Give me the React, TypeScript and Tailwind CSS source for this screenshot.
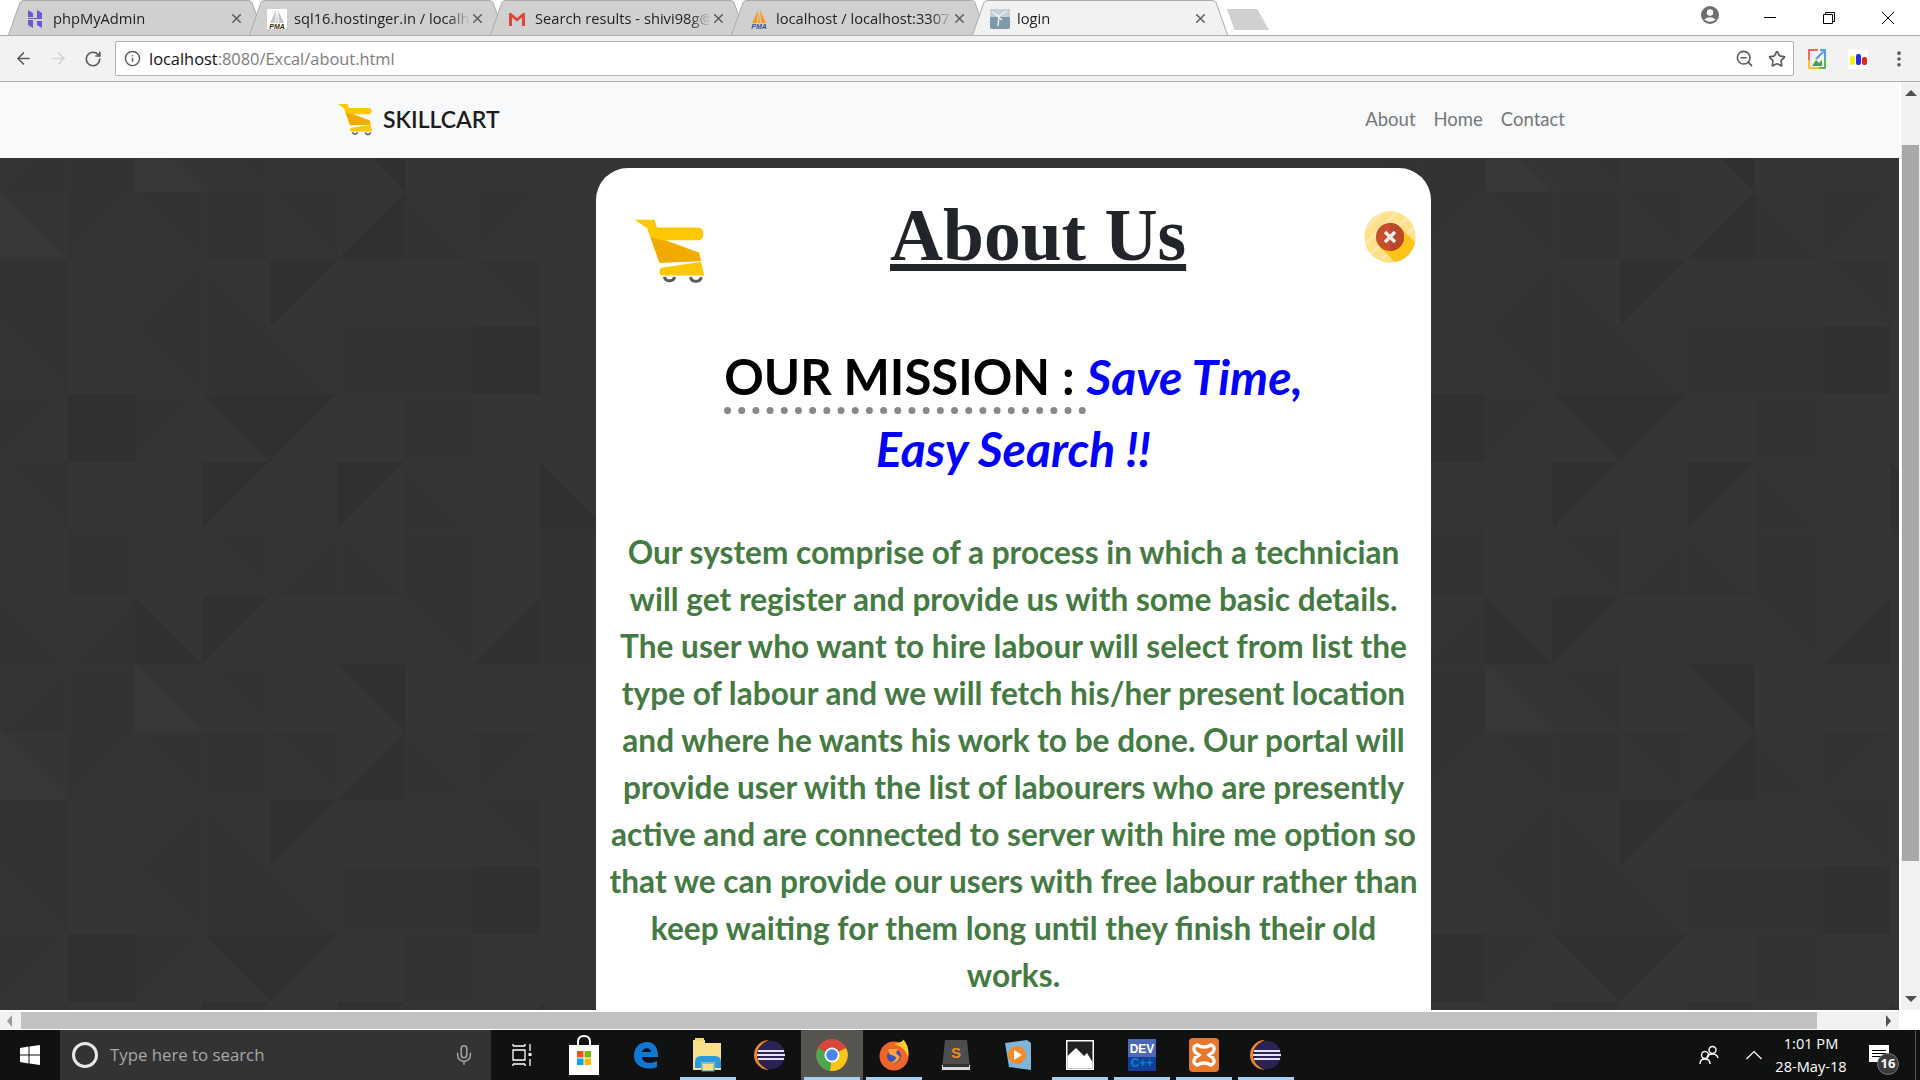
import { ArrowLeft, ArrowRight, Info, Mic, MoreVertical, RotateCw, Star, X, ZoomOut } from 'lucide-react';
import type { ReactNode } from 'react';

const SHADES: Record<string, string> = { d: '#333333', D: '#303030', l: '#383838' };
const CELL = 67.5;

// triangle map of the page background, read off the picture cell by cell
const ROWS = [
  'bll tld trd fd trd brD bld tld .',
  'fd . brd bld tlD . . trd .',
  'trd . trd fd bld fd fd fD .',
  'tld fD tld trD tlD . fd . .',
  'trd . . tlD . tlD bld . blD',
  '. fd . trd brd bld fd . fd',
  'bld brd blD tlD . . trd brD fd',
  'brd fd bll trd . trD . . .',
];

const corners: Record<string, string> = {
  tl: `0,0 ${CELL},0 0,${CELL}`,
  tr: `0,0 ${CELL},0 ${CELL},${CELL}`,
  bl: `0,0 ${CELL},${CELL} 0,${CELL}`,
  br: `${CELL},0 ${CELL},${CELL} 0,${CELL}`,
  f: `0,0 ${CELL},0 ${CELL},${CELL} 0,${CELL}`,
};

const PageBackground = () => (
  <svg className="absolute inset-0 h-full w-full" aria-hidden="true">
    <defs>
      <pattern id="tris" patternUnits="userSpaceOnUse" x="0" y="33.8" width="1350" height="540">
        <rect width="1350" height="540" fill="#353535" />
        {ROWS.map((row, r) =>
          row.split(' ').map((t, c) =>
            t === '.' ? null : (
              <polygon
                key={`${r}-${c}`}
                transform={`translate(${c * CELL} ${r * CELL})`}
                points={corners[t.slice(0, -1)]}
                fill={SHADES[t.slice(-1)]}
              />
            ),
          ),
        )}
      </pattern>
    </defs>
    <rect width="100%" height="100%" fill="url(#tris)" />
  </svg>
);

const CartLogo = ({ className }: { className: string }) => (
  <svg viewBox="40 55 220 205" className={className}>
    <path d="M45 60H105L112 84H235Q252 84 252 103T235 122H140L240 160L245 185L120 190L92 112L82 85Z" fill="#fdc800" />
    <path d="M92 112L140 125L238 160L245 185L120 190Z" fill="#f2a900" />
    <path d="M127 205L245 187L255 228H130Q118 228 120 215Q120 208 127 205Z" fill="#fdc800" />
    <path d="M134 233A17 17 0 0 0 166 233M213 233A17 17 0 0 0 246 233" fill="none" stroke="#5b5b5b" strokeWidth="9" />
  </svg>
);

const CloseBadge = () => (
  <svg viewBox="0 0 52 52" className="mt-[21px] ml-auto h-[52px] w-[52px] shrink-0">
    <defs>
      <clipPath id="badge">
        <circle cx="26" cy="26" r="25.7" />
      </clipPath>
    </defs>
    <g clipPath="url(#badge)">
      <rect width="52" height="52" fill="#fde08a" />
      <path d="M0 20L20 0M0 34L34 0M6 44L44 6M18 48L50 16" stroke="#fde9ae" strokeWidth="3" />
      <path d="M16 36L36 16L56 36L36 56Z" fill="#fcc419" />
      <circle cx="26" cy="26" r="14" fill="#c64f2a" />
      <path d="M26 12A14 14 0 0 1 26 40Z" fill="#b8482a" />
      <path d="M21 21L31 31M31 21L21 31" stroke="#ececec" strokeWidth="3.4" />
    </g>
  </svg>
);

const HostingerFav = () => (
  <svg viewBox="0 0 18 18" className="h-[18px] w-[18px]">
    <path d="M2 0L7 3V7H2ZM11 0L16 3V9H2V8H11ZM2 10H7V18L2 15ZM11 11H16V18L11 15Z" fill="#6f55d8" />
  </svg>
);

const PmaFav = ({ light }: { light?: boolean }) => (
  <svg viewBox="0 0 20 20" className="h-5 w-5">
    {light && <rect width="20" height="20" fill="#fff" />}
    <path d="M9 1L3 14H8ZM11 1L17 14H12ZM10 2L9 14H11Z" fill={light ? '#c6c6c6' : '#f59a23'} />
    <text x="10" y="19.5" textAnchor="middle" fontSize="7" fontWeight="700" fontStyle="italic" fontFamily="Liberation Sans, sans-serif" fill={light ? '#3a2a05' : '#34508f'}>
      PMA
    </text>
  </svg>
);

const GmailFav = () => (
  <svg viewBox="0 0 18 18" className="h-[18px] w-[18px]">
    <path d="M1 3H3L9 8L15 3H17V16H14V7.5L9 11.5L4 7.5V16H1Z" fill="#d9483b" />
  </svg>
);

const LoginFav = () => (
  <svg viewBox="0 0 20 20" className="h-5 w-5">
    <rect width="20" height="20" rx="2" fill="#7d99ab" />
    <rect width="20" height="8" fill="#c4d0d8" />
    <path d="M2 3L9 7L17 2M9 7L8 17M5 5L12 11" stroke="#eef2f4" strokeWidth="1.4" fill="none" />
  </svg>
);

const tabs = [
  { title: 'phpMyAdmin', icon: <HostingerFav /> },
  { title: 'sql16.hostinger.in / localhost', icon: <PmaFav light /> },
  { title: 'Search results - shivi98g@gmail.com', icon: <GmailFav /> },
  { title: 'localhost / localhost:3307 / db', icon: <PmaFav /> },
  { title: 'login', icon: <LoginFav />, active: true },
];

const Tab = ({ title, icon, active }: { title: string; icon: ReactNode; active?: boolean }) => (
  <div className={`relative -ml-[15px] h-[35px] w-[256px] shrink-0 first:ml-0 ${active ? 'z-10' : ''}`}>
    <svg viewBox="0 0 256 36" className="absolute inset-0 h-[36px] w-[256px]">
      <path
        d="M0.5 35L12 2.5Q13 0.5 16 0.5H240Q243 0.5 244 2.5L255.5 35"
        fill={active ? '#f2f2f2' : '#d0d0d0'}
        stroke="#a9a9a9"
      />
    </svg>
    <div className="relative flex h-full items-center pl-[18px] pr-[20px] pt-[2px]">
      <span className="flex w-[27px] shrink-0">{icon}</span>
      <span className="w-[176px] overflow-hidden whitespace-nowrap text-[14.7px] text-[#222] [mask-image:linear-gradient(to_right,black_88%,transparent)]">
        {title}
      </span>
      <X className="ml-auto h-[15px] w-[15px] text-[#5a5a5a]" strokeWidth={2.4} />
    </div>
  </div>
);

const TabStrip = () => (
  <div className="flex h-[35px] items-start bg-white pl-[8px]">
    {tabs.map((t) => (
      <Tab key={t.title} {...t} />
    ))}
    <div className="ml-[-1px] mt-[9px] h-[21px] w-[42px] bg-[#d0d0d0] [clip-path:polygon(0_0,72%_0,100%_100%,18%_100%)]" />
    <div className="ml-auto flex items-center pr-[2px]">
      <svg viewBox="0 0 18 18" className="mr-[21px] mb-[5px] h-[18px] w-[18px]">
        <circle cx="9" cy="9" r="9" fill="#6e6e6e" />
        <circle cx="9" cy="6.5" r="3.2" fill="#fff" />
        <path d="M3.2 13.4Q9 9 14.8 13.4Q9 18 3.2 13.4Z" fill="#fff" />
      </svg>
      <div className="flex h-[35px] w-[60px] items-center justify-center">
        <div className="h-px w-3 bg-black" />
      </div>
      <div className="flex h-[35px] w-[58px] items-center justify-center">
        <svg viewBox="0 0 12 12" className="h-3 w-3" fill="none" stroke="#000">
          <path d="M0.5 2.5H9.5V11.5H0.5ZM2.5 2.5V0.5H11.5V9.5H9.5" />
        </svg>
      </div>
      <div className="flex h-[35px] w-[60px] items-center justify-center">
        <svg viewBox="0 0 12 12" className="h-3 w-3" stroke="#000">
          <path d="M0 0L12 12M12 0L0 12" />
        </svg>
      </div>
    </div>
  </div>
);

const Toolbar = () => (
  <div className="flex h-[47px] items-center border-y border-[#aeaeae] bg-[#f2f2f2] font-['Open_Sans',sans-serif]">
    <ArrowLeft className="ml-[14px] h-[19px] w-[19px] text-[#5a5a5a]" strokeWidth={2} />
    <ArrowRight className="ml-[16px] h-[19px] w-[19px] text-[#d2d2d2]" strokeWidth={2} />
    <RotateCw className="ml-[16px] h-[18px] w-[18px] text-[#5a5a5a]" strokeWidth={2.2} />
    <div className="ml-[13px] flex h-[35px] w-[1679px] items-center rounded-[2px] border border-[#b0b0b0] bg-white">
      <Info className="ml-[8px] h-[17px] w-[17px] text-[#5a5a5a]" strokeWidth={2} />
      <span className="ml-[8px] pt-[2px] text-[16.4px] text-[#111]">
        localhost<span className="text-[#7c7c7c]">:8080/Excal/about.html</span>
      </span>
      <ZoomOut className="ml-auto h-[19px] w-[19px] text-[#5a5a5a]" strokeWidth={2} />
      <Star className="ml-[14px] mr-[7px] h-[18px] w-[18px] text-[#5a5a5a]" strokeWidth={2.2} />
    </div>
    <svg viewBox="0 0 18 20" className="ml-[14px] h-5 w-[18px]" fill="none" strokeWidth="2">
      <path d="M10 1H1V11" stroke="#ea6a5f" />
      <path d="M1 11V19H11" stroke="#f7c427" />
      <path d="M11 19H17V9" stroke="#5fb55f" />
      <path d="M17 9V1H12M8 10L16 2" stroke="#5a9bf0" />
      <path d="M4 17L8 11L11 14L14 11V17Z" fill="#49a34c" stroke="none" />
    </svg>
    <svg viewBox="0 0 20 20" className="ml-[22px] h-5 w-5">
      <rect width="20" height="20" fill="#fff" />
      <rect x="2" y="7" width="5" height="9" rx="2" fill="#f8ee10" />
      <rect x="8" y="5" width="5" height="11" rx="2" fill="#2a2ae8" />
      <rect x="14" y="8" width="5" height="8" rx="2" fill="#ee2020" />
    </svg>
    <MoreVertical className="ml-[21px] h-5 w-5 text-[#5a5a5a]" strokeWidth={2.4} />
  </div>
);

const Navbar = () => (
  <nav className="flex h-[76px] shrink-0 items-center bg-[#f8f9fa] pl-[337px] pr-[334px]">
    <CartLogo className="h-[34px] w-[36px]" />
    <span className="ml-[10px] mb-[2px] text-[23px] font-semibold text-[#1c1c1c]">SKILLCART</span>
    <div className="ml-auto flex gap-[18px] text-[18.5px] text-[#777]">
      <span>About</span>
      <span>Home</span>
      <span>Contact</span>
    </div>
  </nav>
);

const AboutCard = () => (
  <section className="relative ml-[596px] mt-[10px] h-[900px] w-[835px] rounded-t-[32px] bg-white px-[8px] pt-[22px]">
    <div className="flex items-start pl-[29px] pr-[7px]">
      <CartLogo className="mt-[28px] h-[68px] w-[73px] shrink-0" />
      <h1 className="ml-[184px] mt-[1px] font-['Liberation_Serif',serif] text-[73.5px] leading-[90px] font-bold text-[#212529] underline decoration-[7px] underline-offset-[4px] [text-decoration-skip-ink:none]">
        About Us
      </h1>
      <CloseBadge />
    </div>
    <h2 className="mt-[54px] text-center text-[48px] leading-[72px] font-bold text-black">
      <span className="border-b-[7px] border-dotted border-[#888] pb-[2px] text-[49px]">OUR MISSION : </span>
      <span className="text-[#0000ff] italic">
        Save Time,
        <br />
        Easy Search !!
      </span>
    </h2>
    <p className="mt-[44px] text-center text-[31.6px] leading-[47px] font-bold text-[#457a43]">
      Our system comprise of a process in which a technician will get register and provide us with some basic details. The user who want to hire labour will select from list the type of labour and we will fetch his/her present location and where he wants his work to be done. Our portal will provide user with the list of labourers who are presently active and are connected to server with hire me option so that we can provide our users with free labour rather than keep waiting for them long until they finish their old works.
    </p>
  </section>
);

const VerticalScrollbar = () => (
  <div className="flex w-[21px] shrink-0 flex-col items-center border-l-2 border-white bg-[#f1f1f1]">
    <div className="mt-[8px] h-0 w-0 border-x-[6px] border-b-[6px] border-x-transparent border-b-[#505050]" />
    <div className="mt-[49px] h-[716px] w-[17px] bg-[#a8a8a8]" />
    <div className="mt-auto mb-[8px] h-0 w-0 border-x-[6px] border-t-[6px] border-x-transparent border-t-[#505050]" />
  </div>
);

const HorizontalScrollbar = () => (
  <div className="flex h-[20px] shrink-0 bg-white">
    <div className="flex h-[19px] w-[1899px] items-center border-t-2 border-white bg-[#f1f1f1]">
      <div className="ml-[7px] h-0 w-0 border-y-[6px] border-r-[5px] border-y-transparent border-r-[#9a9a9a]" />
      <div className="ml-[9px] h-full w-[1796px] bg-[#c1c1c1]" />
      <div className="ml-[69px] h-0 w-0 border-y-[6px] border-l-[5px] border-y-transparent border-l-[#505050]" />
    </div>
  </div>
);

const Eclipse = () => (
  <svg viewBox="0 0 32 32" className="h-8 w-8">
    <path d="M15 1A15 15 0 0 0 15 31A16 16 0 0 1 15 1Z" fill="#f08a1d" />
    <circle cx="17" cy="16" r="14" fill="#2c2255" />
    <path d="M4 12H30M3 16H31M4 20H30" stroke="#e8e4f4" strokeWidth="2" />
  </svg>
);

const taskbarApps: { key: string; on?: boolean; bar?: boolean; icon: ReactNode }[] = [
  {
    key: 'taskview',
    icon: (
      <svg viewBox="0 0 20 24" className="h-6 w-5" fill="none" stroke="#fff" strokeWidth="1.3">
        <path d="M1 3H13M1 3V1M13 3V1M1 7H13V17H1ZM1 21H13M1 21V23M13 21V23M18 1V8M18 16V23" />
        <rect x="16.5" y="10" width="3" height="3" fill="#fff" stroke="none" />
      </svg>
    ),
  },
  {
    key: 'store',
    icon: (
      <svg viewBox="0 0 30 40" className="h-10 w-[30px]">
        <path d="M9 11V7Q9 1 15 1T21 7V11" fill="none" stroke="#fff" strokeWidth="2" />
        <rect y="10" width="30" height="30" fill="#fff" />
        <rect x="8" y="16" width="6.5" height="6.5" fill="#f25022" />
        <rect x="15.5" y="16" width="6.5" height="6.5" fill="#7fba00" />
        <rect x="8" y="23.5" width="6.5" height="6.5" fill="#00a4ef" />
        <rect x="15.5" y="23.5" width="6.5" height="6.5" fill="#ffb900" />
      </svg>
    ),
  },
  {
    key: 'edge',
    icon: (
      <svg viewBox="0 0 26 28" className="h-7 w-[26px]">
        <path d="M1 15C1 6 7 1 14 1C21 1 25 6 25 16H9C9 21 16 24 24 20V26C14 30 1 26 1 15ZM9 11H18C18 6 10 6 9 11Z" fill="#0f78d4" fillRule="evenodd" />
      </svg>
    ),
  },
  {
    key: 'explorer',
    bar: true,
    icon: (
      <svg viewBox="0 0 30 34" className="h-[34px] w-[30px]">
        <path d="M0 2H12V5H28V32H0Z" fill="#fbe08c" />
        <rect x="2" y="0" width="9" height="3" fill="#f7d56b" />
        <path d="M2 30V24Q2 18 8 18H22Q28 18 28 24V30H22V24H8V30Z" fill="#2c9ae0" />
        <rect x="9" y="25" width="12" height="8" fill="#fbe08c" stroke="#2c9ae0" />
      </svg>
    ),
  },
  { key: 'eclipse-1', icon: <Eclipse /> },
  {
    key: 'chrome',
    on: true,
    bar: true,
    icon: (
      <svg viewBox="0 0 32 32" className="h-8 w-8">
        <circle cx="16" cy="16" r="16" fill="#d9483b" />
        <path d="M16 16L2 9A16 16 0 0 0 14 32Z" fill="#4aa84f" />
        <path d="M16 16L30 9A16 16 0 0 1 14 32Z" fill="#f5c518" />
        <circle cx="16" cy="16" r="7.5" fill="#fff" />
        <circle cx="16" cy="16" r="5.8" fill="#4d86ea" />
      </svg>
    ),
  },
  {
    key: 'firefox',
    bar: true,
    icon: (
      <svg viewBox="0 0 30 32" className="h-8 w-[30px]">
        <circle cx="15" cy="17" r="14.5" fill="#f0642a" />
        <path d="M15 5Q26 2 24 0Q31 8 29 18Q26 8 15 5Z" fill="#ffcb2e" />
        <circle cx="15" cy="17" r="7" fill="#3d4fb5" />
        <path d="M9 10H19L17 14L21 18Q18 26 10 23Q17 23 17 18L10 15Z" fill="#ffa436" />
      </svg>
    ),
  },
  {
    key: 'sublime',
    icon: (
      <svg viewBox="0 0 28 30" className="h-[30px] w-7">
        <path d="M3 0H25L28 28H0Z" fill="#4d4d4d" />
        <path d="M0 25H28V30H0Z" fill="#d8d8d8" />
        <path d="M1 24H27V27H1Z" fill="#333" />
        <text x="14" y="18" textAnchor="middle" fontSize="15" fontWeight="700" fill="#f08c1e" fontFamily="Liberation Sans, sans-serif">
          S
        </text>
      </svg>
    ),
  },
  {
    key: 'player',
    icon: (
      <svg viewBox="0 0 26 30" className="h-[30px] w-[26px]">
        <path d="M0 3L22 0L26 3V30L4 27Z" fill="#7fb6d8" />
        <circle cx="12" cy="15" r="9" fill="#f08a2a" />
        <path d="M9 10L17 15L9 20Z" fill="#fff" />
      </svg>
    ),
  },
  {
    key: 'photos',
    bar: true,
    icon: (
      <svg viewBox="0 0 28 30" className="h-[30px] w-7">
        <rect width="28" height="30" fill="#fff" />
        <rect x="1.5" y="1.5" width="25" height="27" fill="#222" />
        <path d="M1.5 28.5V16L10 8L18 16L21 13L26.5 22V28.5Z" fill="#fff" />
      </svg>
    ),
  },
  {
    key: 'dev',
    bar: true,
    icon: (
      <svg viewBox="0 0 28 32" className="h-8 w-7">
        <rect width="28" height="32" fill="#123f9a" />
        <rect width="28" height="18" fill="#4d68b6" />
        <text x="14" y="14" textAnchor="middle" fontSize="12" fontWeight="700" fill="#fff" fontFamily="Liberation Sans, sans-serif">
          DEV
        </text>
        <text x="14" y="28" textAnchor="middle" fontSize="12" fontWeight="700" fill="#0a84d8" fontFamily="Liberation Sans, sans-serif">
          C++
        </text>
      </svg>
    ),
  },
  {
    key: 'xampp',
    bar: true,
    icon: (
      <svg viewBox="0 0 30 34" className="h-[34px] w-[30px]">
        <rect width="30" height="34" rx="4" fill="#e9772a" />
        <path d="M8 7Q15 11 22 7Q27 9 24 14L20 17L24 20Q27 25 22 27Q15 23 8 27Q3 25 6 20L10 17L6 14Q3 9 8 7Z" fill="none" stroke="#fff" strokeWidth="3.4" />
      </svg>
    ),
  },
  { key: 'eclipse-2', bar: true, icon: <Eclipse /> },
];

const Taskbar = () => (
  <footer className="flex h-[50px] shrink-0 items-stretch bg-[#101212] text-white">
    <div className="flex w-[60px] items-center justify-center">
      <svg viewBox="0 0 20 20" className="h-5 w-5" fill="#fff">
        <path d="M0 3L8.5 1.6V9.4H0ZM9.5 1.5L20 0V9.4H9.5ZM0 10.5H8.5V18.4L0 17ZM9.5 10.5H20V20L9.5 18.5Z" />
      </svg>
    </div>
    <div className="flex w-[431px] items-center bg-[#333]">
      <div className="ml-[12px] h-[26px] w-[26px] rounded-full border-[3px] border-[#e8e8e8]" />
      <span className="ml-[12px] text-[16.8px] text-[#a8a8a8]">Type here to search</span>
      <Mic className="ml-auto mr-[16px] h-[22px] w-[22px] text-[#a8a8a8]" strokeWidth={1.6} />
    </div>
    {taskbarApps.map((app) => (
      <div
        key={app.key}
        className={`relative flex w-[62px] items-center justify-center ${app.on ? 'bg-[#55544f]' : ''}`}
      >
        {app.icon}
        {app.bar && <div className="absolute inset-x-[3px] bottom-0 h-[3px] bg-[#a6cff2]" />}
      </div>
    ))}
    <div className="ml-auto flex items-center pr-[4px]">
      <svg viewBox="0 0 20 20" className="h-5 w-5" fill="none" stroke="#fff" strokeWidth="1.4">
        <circle cx="13.5" cy="5" r="3.5" />
        <path d="M8 12Q9 9 13.5 9T19 13" />
        <circle cx="6" cy="10" r="3.5" />
        <path d="M1 19Q1 14 6 14T11 19" />
      </svg>
      <svg viewBox="0 0 16 10" className="ml-[27px] h-[10px] w-4" fill="none" stroke="#fff" strokeWidth="1.2">
        <path d="M0.5 9L8 1.5L15.5 9" />
      </svg>
      <div className="ml-[5px] w-[88px] text-center text-[14.6px] leading-[23px]">
        <div>1:01 PM</div>
        <div>28-May-18</div>
      </div>
      <div className="relative ml-[14px] mr-[20px] h-[26px] w-[26px]">
        <div className="absolute left-0 top-[3px] flex h-[17px] w-[20px] flex-col justify-center gap-[2px] bg-white px-[3px]">
          <div className="h-px bg-black" />
          <div className="h-px bg-black" />
          <div className="h-px bg-black" />
        </div>
        <div className="absolute left-[8px] top-[11px] flex h-[22px] w-[22px] items-center justify-center rounded-full border border-[#777] bg-[#3b3b3b] text-[13px] font-bold">
          16
        </div>
      </div>
      <div className="h-[50px] w-px bg-[#555]" />
    </div>
  </footer>
);

export default function App() {
  return (
    <div className="flex h-screen w-screen flex-col overflow-hidden font-['Lato',sans-serif]">
      <div className="font-['Open_Sans',sans-serif]">
        <TabStrip />
      </div>
      <Toolbar />
      <div className="flex min-h-0 flex-1">
        <div className="flex min-w-0 flex-1 flex-col">
          <Navbar />
          <main className="relative min-h-0 flex-1 overflow-hidden">
            <PageBackground />
            <AboutCard />
          </main>
        </div>
        <VerticalScrollbar />
      </div>
      <HorizontalScrollbar />
      <div className="font-['Open_Sans',sans-serif]">
        <Taskbar />
      </div>
    </div>
  );
}
